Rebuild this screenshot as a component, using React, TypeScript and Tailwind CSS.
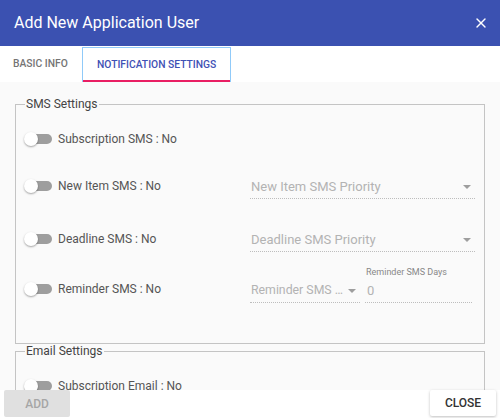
import { X } from "lucide-react";

function Toggle() {
  return (
    <span className="relative inline-flex h-[14px] w-[28px] shrink-0 items-center">
      <span className="absolute left-[2px] h-[10px] w-[26px] rounded-full bg-[#9e9e9e]" />
      <span className="absolute left-0 h-[14px] w-[14px] rounded-full bg-white shadow-[0_1px_2px_rgba(0,0,0,0.35)]" />
    </span>
  );
}

function ToggleLabel({ label }: { label: string }) {
  return (
    <div className="flex w-[234px] shrink-0 items-center gap-[6px] pl-[8px]">
      <Toggle />
      <span className="text-[12px] text-[#555]">{label}</span>
    </div>
  );
}

function SelectField({ placeholder, width, small }: { placeholder: string; width: string; small?: boolean }) {
  return (
    <div className={`${width} flex h-[25px] items-center justify-between border-b border-dotted border-[#bdbdbd] pr-[4px] pt-[2px]`}>
      <span className={`truncate pl-[1px] text-[#b3b3b3] ${small ? "text-[12.3px]" : "text-[13px]"}`}>{placeholder}</span>
      <span className="ml-[4px] h-0 w-0 shrink-0 border-x-[4px] border-t-[4px] border-x-transparent border-t-[#9e9e9e]" />
    </div>
  );
}

function Fieldset({ legend, children }: { legend: string; children: React.ReactNode }) {
  return (
    <fieldset className="mx-[15px] border border-[#c4c4c4] px-0 pt-[8px]">
      <legend className="ml-[9px] px-[1px] text-[12px] leading-[14px] text-[#444]">{legend}</legend>
      {children}
    </fieldset>
  );
}

export default function App() {
  return (
    <div className="flex h-[418px] w-[500px] flex-col bg-white font-['Roboto',sans-serif]">
      <header className="flex h-[46px] shrink-0 items-center justify-between bg-[#3b51b1] pl-[14px] pr-[11px] text-white">
        <h1 className="text-[16px] font-normal">Add New Application User</h1>
        <X className="h-[16px] w-[16px]" strokeWidth={2} />
      </header>

      <div className="flex h-[36px] shrink-0 items-stretch bg-white">
        <div className="flex w-[82px] items-center pl-[13px] text-[10.3px] font-medium text-[#757575]">BASIC INFO</div>
        <div className="mt-[1px] flex items-center border-x border-t border-[#90caf9] px-[14px] text-[10.3px] font-medium text-[#3f51b5] shadow-[inset_0_-2px_0_#e91e63]">
          NOTIFICATION SETTINGS
        </div>
      </div>

      <div className="flex-1 overflow-hidden bg-[#fafafa] pt-[15px]">
        <Fieldset legend="SMS Settings">
          <div className="flex h-[40px] items-center">
            <ToggleLabel label="Subscription SMS : No" />
          </div>
          <div className="flex h-[54px] items-center">
            <ToggleLabel label="New Item SMS : No" />
            <SelectField placeholder="New Item SMS Priority" width="w-[225px]" />
          </div>
          <div className="flex h-[52px] items-center">
            <ToggleLabel label="Deadline SMS : No" />
            <SelectField placeholder="Deadline SMS Priority" width="w-[225px]" />
          </div>
          <div className="flex h-[48px] items-center">
            <ToggleLabel label="Reminder SMS : No" />
            <div className="mt-[2px] flex items-end">
              <SelectField placeholder="Reminder SMS Priority" width="w-[110px]" small />
              <div className="ml-[5px] flex w-[107px] flex-col">
                <span className="-mt-[14px] pl-[1px] text-[9px] leading-[12px] text-[#888]">Reminder SMS Days</span>
                <span className="h-[25px] border-b border-dotted border-[#bdbdbd] pl-[2px] pt-[5px] text-[13px] leading-[16px] text-[#b3b3b3]">0</span>
              </div>
            </div>
          </div>
          <div className="h-[30px]" />
        </Fieldset>

        <Fieldset legend="Email Settings">
          <div className="flex h-[40px] items-center">
            <ToggleLabel label="Subscription Email : No" />
          </div>
          <div className="h-[40px]" />
        </Fieldset>
      </div>

      <footer className="flex h-[28px] shrink-0 items-start justify-between bg-white px-[4px]">
        <button className="h-[27px] w-[66px] rounded-[2px] bg-[#e0e0e0] text-[12px] font-medium text-[#a6a6a6]">ADD</button>
        <button className="h-[26px] w-[66px] rounded-[2px] bg-white text-[12px] font-medium text-[#333] shadow-[0_1px_3px_rgba(0,0,0,0.25)]">
          CLOSE
        </button>
      </footer>
    </div>
  );
}
